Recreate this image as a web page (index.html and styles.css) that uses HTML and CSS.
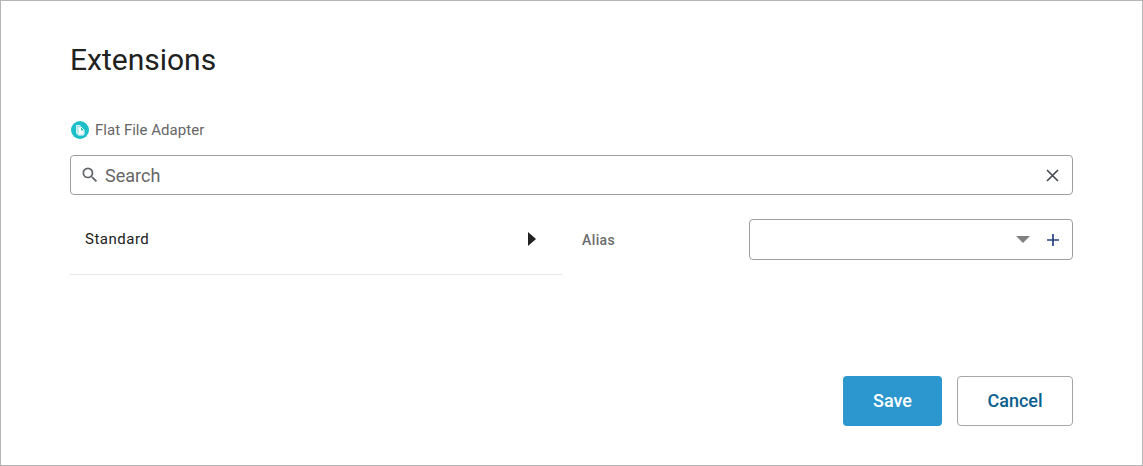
FILE: index.html
```html
<!DOCTYPE html>
<html lang="en">
<head>
    <meta charset="UTF-8">
    <meta name="viewport" content="width=device-width, initial-scale=1.0">
    <title>Extensions</title>
    <link rel="stylesheet" href="styles.css">
</head>
<body>
    <div class="dialog">
        <h1>Extensions</h1>
        <div class="adapter">
            <svg class="adapter-icon" width="18" height="18" viewBox="0 0 18 18">
                <circle cx="9" cy="9" r="9" fill="#1dbfc9"/>
                <path d="M5 4h4l1 1.2H6.4V13H6a1 1 0 0 1-1-1z" fill="#fff" opacity="0.8"/>
                <path d="M7 6h3l3 3v4a1 1 0 0 1-1 1H7z" fill="none" stroke="#fff" stroke-width="1"/>
                <path d="M7.5 6.5h2.5v3h2.5V13.500H7.500z" fill="#fff"/>
            </svg>
            <span>Flat File Adapter</span>
        </div>
        <div class="search">
            <svg class="search-icon" width="20" height="20" viewBox="0 0 24 24">
                <path fill="#5f6368" d="M15.5 14h-.79l-.28-.27A6.47 6.47 0 0 0 16 9.5 6.5 6.5 0 1 0 9.5 16c1.61 0 3.09-.59 4.23-1.57l.27.28v.79l5 4.99L20.49 19l-4.99-5zm-6 0C7.01 14 5 11.99 5 9.5S7.01 5 9.5 5 14 7.01 14 9.5 11.99 14 9.5 14z"/>
            </svg>
            <input class="search-input" type="text" placeholder="Search">
            <svg width="13" height="13" viewBox="0 0 13 13">
                <path d="M1 1l11 11M12 1L1 12" stroke="#44474f" stroke-width="1.6" fill="none"/>
            </svg>
        </div>
        <div class="content">
            <div class="tree">
                <div class="tree-row">
                    <span>Standard</span>
                    <span class="arrow"></span>
                </div>
            </div>
            <div class="details">
                <label class="alias-label">Alias</label>
                <div class="select">
                    <span class="caret"></span>
                    <svg width="12" height="12" viewBox="0 0 12 12">
                        <path d="M6 0v12M0 6h12" stroke="#23407f" stroke-width="1.7" fill="none"/>
                    </svg>
                </div>
            </div>
        </div>
        <div class="actions">
            <button class="btn btn-save">Save</button>
            <button class="btn btn-cancel">Cancel</button>
        </div>
    </div>
</body>
</html>
```
FILE: styles.css
```css
*{
    margin:0;
    padding:0;
    box-sizing:border-box;
    font-family:'Roboto', sans-serif;
}
body {
    background-color:#fff;
}
.dialog {
    display:flex;
    flex-direction:column;
    width:1143px;
    height:466px;
    padding:41px 69px 0 69px;
    border:1px solid #b5b5b5;
}
h1 {
    font-size:30px;
    font-weight:400;
    line-height:36px;
    color:#212121;
}
.adapter {
    display:flex;
    align-items:center;
    gap:6px;
    margin-top:42px;
    margin-left:1px;
    height:20px;
    font-size:15px;
    letter-spacing:0.03px;
    color:#666;
}
.search {
    display:flex;
    align-items:center;
    height:40px;
    margin-top:15px;
    padding:0 13px 0 9px;
    border:1px solid #9e9e9e;
    border-radius:4px;
}
.search-input {
    flex:1;
    margin-left:5px;
    border:none;
    outline:none;
    font-size:18px;
    color:#666;
}
.search-input::placeholder {
    color:#666;
    opacity:1;
}
.content {
    display:flex;
    margin-top:24px;
}
.tree {
    width:492px;
}
.tree-row {
    display:flex;
    align-items:center;
    justify-content:space-between;
    height:39px;
    padding:0 26px 16px 15px;
    border-bottom:1px solid #e6e6e6;
    font-size:15px;
    letter-spacing:0.5px;
    color:#212121;
    box-sizing:content-box;
}
.arrow {
    width:0;
    height:0;
    border-top:7px solid transparent;
    border-bottom:7px solid transparent;
    border-left:8px solid #212121;
}
.details {
    display:flex;
    align-items:center;
    flex:1;
    height:41px;
    padding-left:20px;
}
.alias-label {
    width:167px;
    font-size:14px;
    font-weight:500;
    letter-spacing:0.4px;
    color:#6b6b6b;
}
.select {
    display:flex;
    align-items:center;
    justify-content:flex-end;
    gap:17px;
    flex:1;
    height:41px;
    padding:0 13px;
    border:1px solid #9e9e9e;
    border-radius:4px;
}
.caret {
    width:0;
    height:0;
    border-left:7px solid transparent;
    border-right:7px solid transparent;
    border-top:7px solid #808080;
}
.actions {
    display:flex;
    justify-content:flex-end;
    gap:15px;
    margin-top:auto;
    margin-bottom:39px;
}
.btn {
    height:50px;
    padding-bottom:2px;
    border-radius:4px;
    font-size:18px;
    font-weight:500;
    cursor:pointer;
}
.btn-save {
    width:99px;
    border:none;
    background-color:#2b97ce;
    color:#fff;
}
.btn-cancel {
    width:116px;
    border:1px solid #a6a6a6;
    background-color:#fff;
    color:#0b5f8f;
}
```
